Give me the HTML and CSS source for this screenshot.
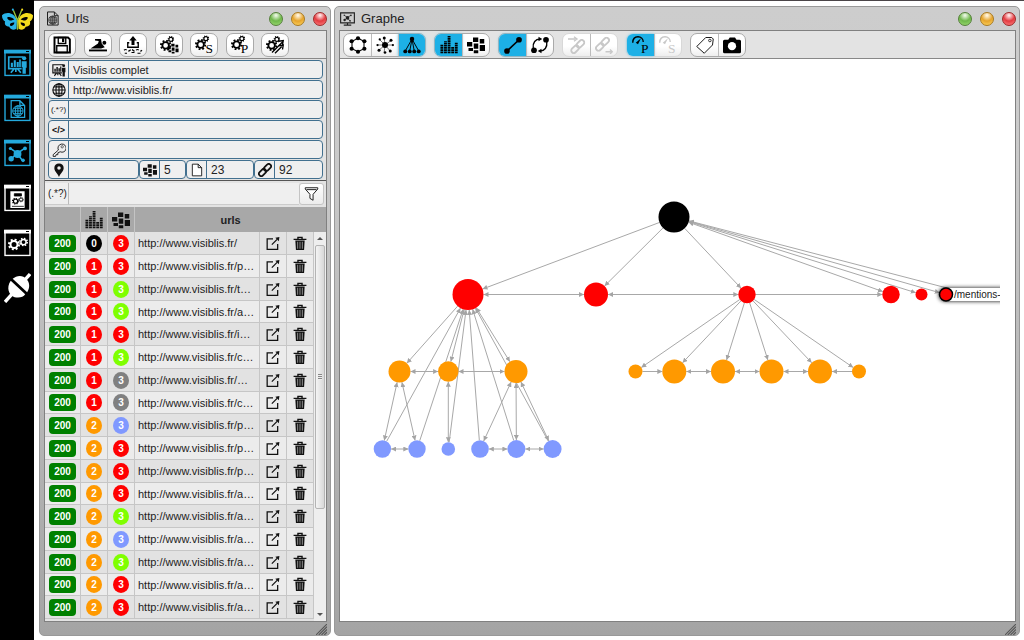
FILE: index.html
```html
<!DOCTYPE html>
<html lang="fr">
<head>
<meta charset="utf-8">
<title>Visiblis</title>
<link rel="stylesheet" href="styles.css">
</head>
<body>
<svg class="sprite" aria-hidden="true">
  <symbol id="i-gear" viewBox="0 0 24 24">
    <circle cx="12" cy="12" r="7" fill="none" stroke="currentColor" stroke-width="4"/>
    <circle cx="12" cy="12" r="10" fill="none" stroke="currentColor" stroke-width="4" stroke-dasharray="3.9 3.95"/>
  </symbol>
  <symbol id="i-gears" viewBox="0 0 24 24">
    <use href="#i-gear" x="0" y="5" width="15" height="15"/>
    <use href="#i-gear" x="10" y="0" width="9" height="9"/>
  </symbol>
  <symbol id="i-blocks" viewBox="0 0 24 24">
    <path fill="currentColor" d="M0 8h7v6H0zM2 16h6v4H2zM8 2h7v6H8zM9 10h6v7H9zM9 19h6v4H9zM17 4h6v6h-6zM17 12h7v8h-7z"/>
  </symbol>
  <symbol id="i-bars" viewBox="0 0 24 24">
    <g fill="none" stroke="currentColor" stroke-width="3.800" stroke-dasharray="2.200 .8">
      <path d="M2.500 23V11M7.300 23V7M12.100 23V0M16.900 23V14M21.700 23V9"/>
    </g>
  </symbol>
  <symbol id="i-globe" viewBox="0 0 24 24">
    <g fill="none" stroke="currentColor" stroke-width="2">
      <circle cx="12" cy="12" r="10.500"/><ellipse cx="12" cy="12" rx="5.200" ry="10.500"/>
      <path d="M12 1v22M1.500 12h21M3.500 6.500h17M3.500 17.500h17"/>
    </g>
  </symbol>
  <symbol id="i-pageglobe" viewBox="0 0 24 24">
    <path d="M4 1.500h11l6 6v15H4zM15 1.500v6h6" fill="none" stroke="currentColor" stroke-width="1.600"/>
    <use href="#i-globe" x="5" y="7" width="15" height="15"/>
  </symbol>
  <symbol id="i-board" viewBox="0 0 24 24">
    <path d="M17 3H1.500v14H17M1 3h18M8 17l-4 5M12 17l4 5M10 17v4" fill="none" stroke="currentColor" stroke-width="2"/>
    <path d="M4 10h2.500v5H4zM7.500 7H10v8H7.500zM11 9h2.500v6H11zM14 6h2v9h-2zM17 8h6v8h-1v7h-4v-8h-1z" fill="currentColor"/>
    <circle cx="20" cy="4.500" r="2.500" fill="currentColor"/>
  </symbol>
  <symbol id="i-net" viewBox="0 0 24 24">
    <path d="M3 5l9 6 9-6M12 11l-8 7M12 12l6 8" stroke="currentColor" stroke-width="2" fill="none"/>
    <circle cx="12" cy="12" r="5" fill="currentColor"/><circle cx="3" cy="5" r="2" fill="currentColor"/>
    <circle cx="21.500" cy="5" r="2.400" fill="currentColor"/><circle cx="4" cy="18" r="3.400" fill="currentColor"/>
    <circle cx="19" cy="20" r="2.300" fill="currentColor"/>
  </symbol>
  <symbol id="i-frame" viewBox="0 0 27 27">
    <path d="M1 1h25v25H1z" fill="none" stroke="currentColor" stroke-width="1.400"/>
    <path d="M0 0h27v4H0z" fill="currentColor"/>
    <path d="M22 2h3" stroke="#000" stroke-width="1.200"/>
  </symbol>
  <symbol id="i-butterfly" viewBox="0 0 30 24">
    <path d="M14.500 12C12 4 4 3 0 7c0 3 1 5 3 6-1 3 1 5 4 5 2 4 5 3 7 2z" fill="#29b4e8"/>
    <path d="M15.500 12C18 4 26 3 30 7c0 3-1 5-3 6 1 3-1 5-4 5-2 4-5 3-7 2z" fill="#f4dc1c"/>
    <path d="M12 11c-2-2-5-3-7-2 0 2 2 3 4 3zM12 14c-3 0-5 1-4 3 2 1 4-1 4-3zM18 11c2-2 5-3 7-2 0 2-2 3-4 3zM18 14c3 0 5 1 4 3-2 1-4-1-4-3z" fill="#000"/>
    <path d="M15 21v-9L11 2M15 12l4-10" stroke="#9ac43c" stroke-width="1.300" fill="none"/>
    <circle cx="10.500" cy="1.500" r="1" fill="#29b4e8"/><circle cx="19.500" cy="1.500" r="1" fill="#f4dc1c"/>
  </symbol>
  <symbol id="i-report" viewBox="0 0 24 24">
    <path d="M3 1h18v21H3z" fill="currentColor"/>
    <path d="M8 4h9v3H8zM5 20h15" stroke="#000" stroke-width="1" fill="#000"/>
    <g color="#000"><use href="#i-gear" x="5" y="9" width="9" height="9"/><use href="#i-gear" x="13" y="8" width="7" height="7"/></g>
  </symbol>
  <symbol id="i-plug" viewBox="0 0 28 32">
    <path d="M1 31l8-9M20 10l7-8" stroke="currentColor" stroke-width="3.500"/>
    <path d="M7 9c-5 7-2 15 4 17 5 1 9 0 11-3zM9 7c4-4 11-4 14 0 4 4 4 9 1 14z" fill="currentColor"/>
  </symbol>
  <symbol id="i-save" viewBox="0 0 24 24">
    <path d="M2 2h18l2.500 2.500V22H2z" fill="none" stroke="currentColor" stroke-width="2.600"/>
    <path d="M7 2h10v8H7zM5 13h14v9H5z" fill="none" stroke="currentColor" stroke-width="1.800"/><path d="M12 3h3v5h-3z" fill="currentColor"/>
  </symbol>
  <symbol id="i-swim" viewBox="0 0 24 24">
    <path d="M0 18h24v2.500H0z" fill="currentColor"/><circle cx="20.500" cy="9" r="2.600" fill="currentColor"/>
    <path d="M8 4h8l1 6 4 5-5 1.500H2L12 10l1-3.500-5-.5z" fill="currentColor"/>
  </symbol>
  <symbol id="i-upload" viewBox="0 0 24 24">
    <path d="M12 0l5 6h-3v6h-4V6H7z" fill="currentColor"/>
    <path d="M7 9H5v6h14V9h-2" stroke="currentColor" stroke-width="1.800" fill="none"/>
    <path d="M0 19q2-2 4 0t4 0 4 0 4 0 4 0 4 0M1 23h3M10 22h4M18 23h4" stroke="currentColor" stroke-width="1.500" stroke-dasharray="4 2" fill="none"/>
  </symbol>
  <symbol id="i-pin" viewBox="0 0 24 24">
    <path d="M12 1c-5 0-8 3-8 7.500C4 14 9 17 12 24c3-7 8-10 8-15.500C20 4 17 1 12 1zm0 4.500a3 3 0 110 6 3 3 0 010-6z" fill="currentColor"/>
  </symbol>
  <symbol id="i-key" viewBox="0 0 24 24">
    <path d="M11 12L2 20v3h4l1-3h3v-3l4-2a7 7 0 10-3-3z" fill="none" stroke="currentColor" stroke-width="1.500"/><circle cx="17.500" cy="6.500" r="2" fill="none" stroke="currentColor"/>
  </symbol>
  <symbol id="i-page" viewBox="0 0 24 24">
    <path d="M4 2h10l6 6v14H4zM14 2v6h6" fill="#fff" stroke="currentColor" stroke-width="1.500"/>
  </symbol>
  <symbol id="i-link" viewBox="0 0 24 24">
    <g fill="none" stroke="currentColor" stroke-width="3" transform="rotate(-45 12 12)">
      <rect x="-1" y="8" width="14" height="8" rx="4"/><rect x="11" y="8" width="14" height="8" rx="4"/>
    </g>
  </symbol>
  <symbol id="i-filter" viewBox="0 0 24 24">
    <path d="M2 2h20v2l-7.500 8.500V22l-5-3v-6.500L2 4zM4 5h16" fill="#fff" stroke="currentColor" stroke-width="1.600"/>
  </symbol>
  <symbol id="i-open" viewBox="0 0 24 24">
    <path d="M12 4H2v18h18v-9M10 14l9-9" fill="none" stroke="currentColor" stroke-width="2.200"/><path d="M16 2l7-1-1 7z" fill="currentColor"/>
  </symbol>
  <symbol id="i-trash" viewBox="0 0 24 24">
    <path d="M1 5h22M8.500 4V1.500h7V4" fill="none" stroke="currentColor" stroke-width="2.400"/>
    <path d="M4 7h16l-1 16H5z" fill="currentColor"/><path d="M8 9v12M12 9v12M16 9v12" stroke="#e8e8e8" stroke-width="1"/>
  </symbol>
  <symbol id="i-ring" viewBox="0 0 24 24">
    <path d="M12 3l8 4v10l-8 4-8-4V7z" fill="none" stroke="currentColor" stroke-width="1.400"/>
    <g fill="currentColor"><circle cx="12" cy="3" r="2.800"/><circle cx="20.500" cy="7" r="2.800"/><circle cx="20.500" cy="17" r="2.800"/><circle cx="12" cy="21" r="2.800"/><circle cx="3.500" cy="17" r="2.800"/><circle cx="3.500" cy="7" r="2.800"/></g>
  </symbol>
  <symbol id="i-star" viewBox="0 0 24 24">
    <path d="M12 12L11 3M12 12l8-6M12 12h10M12 12l7 8M12 12l-1 9M12 12l-7 6M12 12H2M12 12L5 5" stroke="currentColor" stroke-width=".7" fill="none"/>
    <g fill="currentColor"><circle cx="12" cy="12" r="4"/><circle cx="11" cy="2.500" r="2"/><circle cx="20" cy="5.500" r="2"/><circle cx="22.500" cy="12" r="1.500"/><circle cx="19" cy="20" r="2"/><circle cx="12" cy="22" r="1.800"/><circle cx="4" cy="19" r="2"/><circle cx="2" cy="12" r="1.500"/><circle cx="5" cy="4.500" r="1.500"/></g>
  </symbol>
  <symbol id="i-tree" viewBox="0 0 24 24">
    <path d="M12 4L3 20M12 4L9 20M12 4l3 16M12 4l9 16" stroke="currentColor" stroke-width="1.300" fill="none"/>
    <g fill="currentColor"><circle cx="12" cy="4" r="3"/><circle cx="3" cy="20.500" r="2.600"/><circle cx="9" cy="20.500" r="2.600"/><circle cx="15" cy="20.500" r="2.600"/><circle cx="21" cy="20.500" r="2.600"/></g>
  </symbol>
  <symbol id="i-edge" viewBox="0 0 24 24">
    <path d="M4 20L20 5" stroke="currentColor" stroke-width="2.200"/><circle cx="4" cy="20" r="3.800" fill="currentColor"/><circle cx="20" cy="5" r="3.800" fill="currentColor"/>
  </symbol>
  <symbol id="i-cycle" viewBox="0 0 24 24">
    <path d="M3 16C2 9 6 4 12 4M21 8c1 7-3 12-9 12" fill="none" stroke="currentColor" stroke-width="1.800"/>
    <path d="M10 1l5 3-5 3zM14 17l-5 3 5 3z" fill="currentColor"/><circle cx="4" cy="19" r="3.800" fill="currentColor"/><circle cx="20" cy="5" r="3.800" fill="currentColor"/>
  </symbol>
  <symbol id="i-linkin" viewBox="0 0 24 24">
    <use href="#i-link" x="3" y="4" width="20" height="20"/><path d="M0 4h10M8 1l4 3-4 3" fill="none" stroke="currentColor" stroke-width="1.800"/>
  </symbol>
  <symbol id="i-linkout" viewBox="0 0 24 24">
    <use href="#i-link" x="0" y="1" width="20" height="20"/><path d="M14 21h8M20 18l3 3-3 3" fill="none" stroke="currentColor" stroke-width="1.800"/>
  </symbol>
  <symbol id="i-gauge" viewBox="0 0 24 24">
    <path d="M1 9C1 4 4 1 8 1s7 3 7 7" fill="none" stroke="currentColor" stroke-width="1.800"/><path d="M5 9l7-6-4 8z" fill="currentColor"/>
  </symbol>
  <symbol id="i-tag" viewBox="0 0 24 24">
    <path d="M13 2h8l2 2-1 8-11 11L1 14z" fill="#fff" stroke="currentColor" stroke-width="1.200" stroke-linejoin="round"/><circle cx="18.500" cy="6" r="1.700" fill="none" stroke="currentColor"/>
  </symbol>
  <symbol id="i-camera" viewBox="0 0 24 24">
    <path d="M2 5h5l2-3h7l2 3h4q2 0 2 2v14q0 2-2 2H2q-2 0-2-2V7q0-2 2-2z" fill="currentColor"/><circle cx="12" cy="13.500" r="5.500" fill="#fff"/>
  </symbol>
  <symbol id="i-screen" viewBox="0 0 24 24">
    <path d="M1 3h22v16H1zM12 19v3M6 22.500h12" fill="none" stroke="currentColor" stroke-width="1.800"/><use href="#i-net" x="5" y="4" width="14" height="14"/>
  </symbol>
  <symbol id="i-grip" viewBox="0 0 12 12">
    <path d="M0 12L12 0M3 12l9-9M6 12l6-6M9 12l3-3" stroke="#555" stroke-width="1.200"/>
  </symbol>
</svg>

<nav class="rail">
  <button class="rail-item" aria-label="Visiblis"><svg class="logo"><use href="#i-butterfly"/></svg></button>
  <button class="rail-item blue" aria-label="Projets"><svg viewBox="0 0 27 27"><use href="#i-frame"/><use href="#i-board" x="3" y="5" width="21" height="20"/></svg></button>
  <button class="rail-item blue" aria-label="Urls"><svg viewBox="0 0 27 27"><use href="#i-frame"/><use href="#i-pageglobe" x="4" y="5" width="19" height="19"/></svg></button>
  <button class="rail-item blue" aria-label="Graphe"><svg viewBox="0 0 27 27"><use href="#i-frame"/><use href="#i-net" x="4" y="5" width="19" height="19"/></svg></button>
  <button class="rail-item" aria-label="Rapports"><svg viewBox="0 0 27 27"><use href="#i-frame"/><use href="#i-report" x="4" y="5" width="19" height="21"/></svg></button>
  <button class="rail-item" aria-label="Options"><svg viewBox="0 0 27 27"><use href="#i-frame"/><use href="#i-gear" x="4" y="9" width="12" height="12"/><use href="#i-gear" x="15" y="8" width="9" height="9"/></svg></button>
  <button class="rail-item" aria-label="Connexion"><svg><use href="#i-plug"/></svg></button>
</nav>

<main class="desk">
  <section class="window urls">
    <header class="title"><svg><use href="#i-pageglobe"/></svg><h1>Urls</h1>
      <button class="dot green" aria-label="Réduire"></button><button class="dot amber" aria-label="Agrandir"></button><button class="dot red" aria-label="Fermer"></button></header>
    <div class="content">
      <div class="toolbar spread">
        <button class="tool" aria-label="Enregistrer"><svg><use href="#i-save"/></svg></button>
        <button class="tool" aria-label="Explorer"><svg><use href="#i-swim"/></svg></button>
        <button class="tool" aria-label="Exporter"><svg><use href="#i-upload"/></svg></button>
        <button class="tool" aria-label="Groupes"><svg viewBox="0 0 24 24"><use href="#i-gears"/><use href="#i-blocks" x="10" y="9" width="15" height="15"/></svg></button>
        <button class="tool" aria-label="Calcul S"><svg viewBox="0 0 24 24"><use href="#i-gears" y="-1"/><text class="letter" x="14" y="23">S</text></svg></button>
        <button class="tool" aria-label="Calcul P"><svg viewBox="0 0 24 24"><use href="#i-gears" y="-1"/><text class="letter" x="13" y="23">P</text></svg></button>
        <button class="tool" aria-label="Calcul des liens"><svg viewBox="0 0 24 24"><use href="#i-gears"/><path d="M8 22L22 8M12 23l9-9M17 7l6-1-1 6M17 13l6-1-1 6" fill="none" stroke="currentColor" stroke-width="1.800"/></svg></button>
      </div>
      <form class="fields">
        <label class="field"><span class="icon"><svg><use href="#i-board"/></svg></span><input aria-label="Projet" value="Visiblis complet"></label>
        <label class="field"><span class="icon"><svg><use href="#i-globe"/></svg></span><input aria-label="Adresse" value="http://www.visiblis.fr/"></label>
        <label class="field"><span class="icon regex">(.*?)</span><input aria-label="Expression"></label>
        <label class="field"><span class="icon code">&lt;/&gt;</span><input aria-label="Code"></label>
        <label class="field"><span class="icon"><svg><use href="#i-key"/></svg></span><input aria-label="Clé"></label>
        <div class="stats">
          <label class="field"><span class="icon"><svg><use href="#i-pin"/></svg></span><input aria-label="Position"></label>
          <label class="field"><span class="icon"><svg><use href="#i-blocks"/></svg></span><input aria-label="Groupes" value="5"></label>
          <label class="field"><span class="icon"><svg><use href="#i-page"/></svg></span><input aria-label="Pages" value="23"></label>
          <label class="field"><span class="icon"><svg><use href="#i-link"/></svg></span><input aria-label="Liens" value="92"></label>
        </div>
      </form>
      <div class="filter">
        <label for="filter">(.*?)</label><input id="filter"><button aria-label="Filtrer"><svg><use href="#i-filter"/></svg></button>
      </div>
      <div class="list">
        <table>
          <colgroup><col class="c-code"><col class="c-mini"><col class="c-mini"><col><col class="c-mini"><col class="c-mini"></colgroup>
          <thead><tr><th></th><th><svg><use href="#i-bars"/></svg></th><th><svg><use href="#i-blocks"/></svg></th><th class="name" colspan="3">urls</th></tr></thead>
          <tbody id="rows"></tbody>
        </table>
        <div class="scroll"><span class="corner"></span><span class="up"></span><span class="thumb"></span><span class="space"></span><span class="down"></span></div>
      </div>
    </div>
    <footer class="foot"><svg><use href="#i-grip"/></svg></footer>
  </section>

  <section class="window graph">
    <header class="title"><svg><use href="#i-screen"/></svg><h1>Graphe</h1>
      <button class="dot green" aria-label="Réduire"></button><button class="dot amber" aria-label="Agrandir"></button><button class="dot red" aria-label="Fermer"></button></header>
    <div class="content">
      <div class="toolbar">
        <div class="group"><button aria-label="Cercle"><svg><use href="#i-ring"/></svg></button><button aria-label="Étoile"><svg><use href="#i-star"/></svg></button><button class="on" aria-label="Arbre"><svg><use href="#i-tree"/></svg></button></div>
        <div class="group"><button class="on" aria-label="Niveaux"><svg><use href="#i-bars"/></svg></button><button aria-label="Groupes"><svg><use href="#i-blocks"/></svg></button></div>
        <div class="group"><button class="on" aria-label="Lien direct"><svg><use href="#i-edge"/></svg></button><button aria-label="Lien courbe"><svg><use href="#i-cycle"/></svg></button></div>
        <div class="group"><button disabled aria-label="Liens entrants"><svg><use href="#i-linkin"/></svg></button><button disabled aria-label="Liens sortants"><svg><use href="#i-linkout"/></svg></button></div>
        <div class="group"><button class="on" aria-label="Mesure P"><svg viewBox="0 0 24 24"><use href="#i-gauge"/><text class="letter" x="12" y="23">P</text></svg></button><button disabled aria-label="Mesure S"><svg viewBox="0 0 24 24"><use href="#i-gauge"/><text class="letter" x="12" y="23">S</text></svg></button></div>
        <div class="group"><button aria-label="Étiquettes"><svg><use href="#i-tag"/></svg></button><button aria-label="Capture"><svg><use href="#i-camera"/></svg></button></div>
      </div>
      <svg class="canvas" id="canvas" viewBox="340 59 674 562" preserveAspectRatio="xMinYMin meet">
        <defs>
          <marker id="tip" viewBox="0 0 6 6" refX="6" refY="3" markerWidth="5" markerHeight="5" markerUnits="userSpaceOnUse" orient="auto-start-reverse"><path d="M0 0l6 3-6 3z" fill="#a4a4a4"/></marker>
          <clipPath id="edge"><path d="M900 270h100v50H900z"/></clipPath>
          <filter id="shade" x="-10%" y="-50%" width="120%" height="200%"><feDropShadow dx="0" dy="0" stdDeviation="2" flood-opacity="1"/></filter>
        </defs>
        <g id="links"></g>
        <g clip-path="url(#edge)"><rect x="939" y="288" width="90" height="13" rx="6" fill="#fff" filter="url(#shade)"/></g>
        <g id="nodes"></g>
        <text class="tip" x="954" y="298" clip-path="url(#edge)">/mentions-</text>
      </svg>
    </div>
    <footer class="foot"><svg><use href="#i-grip"/></svg></footer>
  </section>
</main>
<script src="app.js"></script>
</body>
</html>
```
FILE: styles.css
```css
* { box-sizing: border-box; }
body { margin: 0; height: 100vh; display: flex; overflow: hidden; background: #fff; color: #222; font: 11px "Liberation Sans", Arial, sans-serif; }
button, input { font: inherit; color: inherit; margin: 0; padding: 0; border: 0; background: none; }
svg { display: block; }
.sprite { width: 0; height: 0; position: absolute; }

.rail { width: 34px; flex: none; background: #000; color: #fff; display: flex; flex-direction: column; }
.rail-item { height: 45px; display: flex; align-items: center; justify-content: center; }
.rail-item:first-child { height: 40px; }
.rail-item svg { width: 27px; height: 28px; }
.rail-item .logo { width: 31px; height: 25px; }
.rail-item:last-child svg { height: 31px; }
.blue { color: #24a9dc; }

.desk { flex: 1; min-width: 0; display: flex; gap: 3px; padding: 5px 4px 4px 5px; border-top: 1px solid #4a4548; }
.window { display: flex; flex-direction: column; min-height: 0; padding: 0 3px 0 4px; border: 1px solid #999; border-radius: 5px; background: linear-gradient(#cdcdcd, #cacaca 25%, #a4a4a4); }
.urls { width: 292px; flex: none; }
.graph { flex: 1; min-width: 0; }
.title { height: 23px; flex: none; display: flex; align-items: center; gap: 8px; padding-left: 1px; }
.title svg { width: 15px; height: 15px; }
.title h1 { margin: 0 auto 0 -2px; font-size: 13px; font-weight: normal; }
.dot { width: 14px; height: 14px; border-radius: 50%; border: 1px solid; }
.green.dot { border-color: #55803a; background: radial-gradient(circle at 50% 20%, #e8f5df 5%, #6fb84a 50%, #9fdc76); }
.amber.dot { border-color: #a97a20; background: radial-gradient(circle at 50% 20%, #fff4dc 5%, #e6a42c 50%, #ffd866); }
.red.dot { border-color: #a02828; background: radial-gradient(circle at 50% 20%, #ffe4e4 5%, #e33b40 50%, #ff8585); }
.content { flex: 1; min-height: 0; display: flex; flex-direction: column; overflow: hidden; border: 1px solid #808080; background: #e3e3e3; }
.foot { height: 13px; flex: none; display: flex; justify-content: flex-end; align-items: flex-end; }
.foot svg { width: 11px; height: 11px; }

.toolbar { height: 28px; flex: none; display: flex; align-items: center; gap: 8px; padding: 0 3px; border-bottom: 1px solid #888; background: #e3e3e3; }
.spread { justify-content: space-between; gap: 0; padding-right: 37px; }
.tool, .group { border: 1px solid #aaa; border-radius: 7px; background: linear-gradient(#fff 55%, #eee); color: #000; }
.tool { width: 28px; height: 24px; display: flex; align-items: center; justify-content: center; }
.toolbar svg { width: 20px; height: 18px; overflow: visible; }
.letter { font: 18px "Liberation Serif", serif; fill: currentColor; }
.group { height: 24px; display: flex; }
.group button { width: 27px; display: flex; align-items: center; justify-content: center; color: #000; }
.group button:first-child { border-radius: 6px 0 0 6px; }
.group button:last-child { border-radius: 0 6px 6px 0; }
.group button + button { border-left: 1px solid #bbb; }
.group .on { background: #1db0e6; box-shadow: 0 0 3px #6cc8ec; }
.group button:disabled { color: #c8c8c8; }
.group:has(button:disabled) { border-color: #d8d8d8; }

.fields { display: grid; gap: 1px; padding: 1px 3px; }
.field { height: 19px; min-width: 0; display: flex; border: 1px solid #42708f; border-radius: 4px; background: #efefef; overflow: hidden; }
.icon { width: 20px; flex: none; display: flex; align-items: center; justify-content: center; border-right: 1px solid #42708f; color: #111; }
.icon svg { width: 14px; height: 14px; }
.regex { font-size: 8px; }
.code { font-size: 9px; font-weight: bold; }
.field input { flex: 1; min-width: 0; padding: 0 4px; }
.stats { display: grid; grid-template-columns: 91fr 47fr 68fr 69fr; font-size: 12px; }

.filter { height: 27px; flex: none; display: flex; align-items: center; border-top: 1px solid #555; }
.filter label { width: 24px; height: 22px; line-height: 22px; padding-left: 3px; font-size: 10px; border-right: 1px solid #bbb; border-bottom: 1px solid #ccc; background: #efefef; }
.filter input { flex: 1; min-width: 0; height: 22px; background: #efefef; border-bottom: 1px solid #ccc; }
.filter button { width: 25px; height: 22px; margin-right: 2px; display: flex; align-items: center; justify-content: center; border: 1px solid #c4c4c4; border-radius: 3px; background: linear-gradient(#fff, #ececec); }
.filter svg { width: 15px; height: 16px; }

.list { flex: 1; min-height: 0; display: grid; grid-template-columns: 1fr 12px; overflow: hidden; }
table { width: 100%; align-self: start; table-layout: fixed; border-collapse: separate; border-spacing: 0; }
.c-code { width: 36px; }
.c-mini { width: 27px; }
th { height: 25px; padding: 0; background: #a8a8a8; border-right: 1px solid #c4c4c4; font-size: 11px; }
th svg { width: 18px; height: 18px; margin: auto; color: #111; }
th.name { padding-left: 12px; border: 0; }
td { height: 23px; padding: 0; border-right: 1px solid #c6c6c6; border-bottom: 1px solid #c6c6c6; }
tr:nth-child(4n) td { height: 22px; }
tbody tr:nth-child(odd) { background: #e2e2e2; }
tbody tr:nth-child(even) { background: #ececec; }
td.url { padding: 0 3px; white-space: nowrap; }
td button { display: block; margin: auto; color: #111; }
td svg { width: 14px; height: 15px; }
.status { display: block; width: 27px; height: 17px; margin: auto; border-radius: 4px; background: #008000; color: #fff; font-weight: bold; font-size: 10px; line-height: 17px; text-align: center; }
.pill { display: block; width: 16px; height: 17px; margin: auto; border-radius: 50%; color: #fff; font-weight: bold; font-size: 10px; line-height: 17px; text-align: center; }
.black { background: #000; }
.pill.red { background: #f00; }
.lime { background: #7fff00; }
.grey { background: #808080; }
.sky { background: #8099ff; }
.orange { background: #f90; }

.scroll { display: flex; flex-direction: column; align-items: center; background: #eee; }
.corner { height: 25px; flex: none; align-self: stretch; background: #a8a8a8; }
.up, .down { flex: none; height: 13px; display: flex; align-items: center; }
.up::before, .down::before { content: ""; border: 3px solid transparent; }
.up::before { border-top: 0; border-bottom-color: #555; }
.down::before { border-bottom: 0; border-top-color: #555; }
.thumb { flex: 264; width: 10px; display: flex; align-items: center; justify-content: center; border: 1px solid #b4b4b4; border-radius: 2px; background: linear-gradient(90deg, #f4f4f4, #d8d8d8); }
.thumb::before { content: ""; width: 4px; height: 6px; background: repeating-linear-gradient(#888 0 1px, #eee 1px 2px); }
.space { flex: 100; }

.canvas { flex: 1; min-height: 0; width: 100%; background: #fff; }
.canvas line { stroke: #a8a8a8; stroke-width: 1; }
.tip { font-size: 10px; fill: #222; }
```
FILE: app.js
```javascript
const rows = [
  ["0 black", "red", ""], ["1 red", "red", "p…"], ["1 red", "lime", "t…"], ["1 red", "lime", "a…"],
  ["1 red", "red", "i…"], ["1 red", "lime", "c…"], ["1 red", "grey", "…"], ["1 red", "grey", "c…"],
  ["2 orange", "sky", "p…"], ["2 orange", "red", "p…"], ["2 orange", "red", "p…"], ["2 orange", "red", "a…"],
  ["2 orange", "lime", "a…"], ["2 orange", "sky", "a…"], ["2 orange", "lime", "a…"], ["2 orange", "red", "a…"],
  ["2 orange", "red", "a…"]
];
document.getElementById("rows").innerHTML = rows.map(([level, group, path]) => {
  const [depth, color] = level.split(" ");
  return `<tr><td><span class="status">200</span></td>
    <td><span class="pill ${color}">${depth}</span></td>
    <td><span class="pill ${group}">3</span></td>
    <td class="url">http://www.visiblis.fr/${path}</td>
    <td><button aria-label="Ouvrir"><svg><use href="#i-open"/></svg></button></td>
    <td><button aria-label="Supprimer"><svg><use href="#i-trash"/></svg></button></td></tr>`;
}).join("");

const nodes = {
  home: [674, 217, 15.5, "#000"],
  a: [468, 294.5, 15.5, "#f00"], b: [596, 294.5, 12, "#f00"], c: [747, 294.5, 8.7, "#f00"],
  d: [891, 294.5, 8.7, "#f00"], e: [921.5, 294.5, 6, "#f00"], v: [972, 294.5, 0, "#f00"],
  f: [946, 294.5, 6.5, "#f00"],
  g: [399.5, 371.5, 11, "#f90"], h: [448.3, 371.5, 10.2, "#f90"], i: [516, 371.5, 11.5, "#f90"],
  j: [635.5, 371.5, 7, "#f90"], k: [674.3, 371.5, 12, "#f90"], l: [723, 371.5, 12, "#f90"],
  m: [771.5, 371.5, 12, "#f90"], n: [820, 371.5, 12, "#f90"], o: [859, 371.5, 7, "#f90"],
  p: [382.4, 449, 8.7, "#8099ff"], q: [417, 449, 8.7, "#8099ff"], r: [448.3, 449, 6.8, "#8099ff"],
  s: [480, 449, 8.8, "#8099ff"], t: [516.4, 449, 9, "#8099ff"], u: [552.6, 449, 9, "#8099ff"]
};
// ">" points at the second node, "=" at both.
const links = "home>a home>b home>c home=d home=e home=f home=v a=b b=c c>d a>g a=h a=i g=h h=i " +
  "p>a q>a r>a s>a t>a u>a g=p g=q h=r i=s i=t i=u p=q s=t t=u " +
  "c>j c>k c>l c>m c>n c>o j>k k=l l=m m=n o>n";
document.getElementById("links").innerHTML = links.split(" ").map(link => {
  const [, from, kind, to] = link.match(/(\w+)([>=])(\w+)/);
  const [x1, y1, r1] = nodes[from], [x2, y2, r2] = nodes[to];
  const length = Math.hypot(x2 - x1, y2 - y1), dx = (x2 - x1) / length, dy = (y2 - y1) / length;
  return `<line x1="${x1 + dx * r1}" y1="${y1 + dy * r1}" x2="${x2 - dx * r2}" y2="${y2 - dy * r2}"
    marker-end="url(#tip)"${kind === "=" ? ' marker-start="url(#tip)"' : ""}/>`;
}).join("");
document.getElementById("nodes").innerHTML = Object.entries(nodes).map(([id, [x, y, r, fill]]) =>
  `<circle cx="${x}" cy="${y}" r="${r}" fill="${fill}"${id === "f" ? ' stroke="#000" stroke-width="1.5"' : ""}/>`
).join("");
```
